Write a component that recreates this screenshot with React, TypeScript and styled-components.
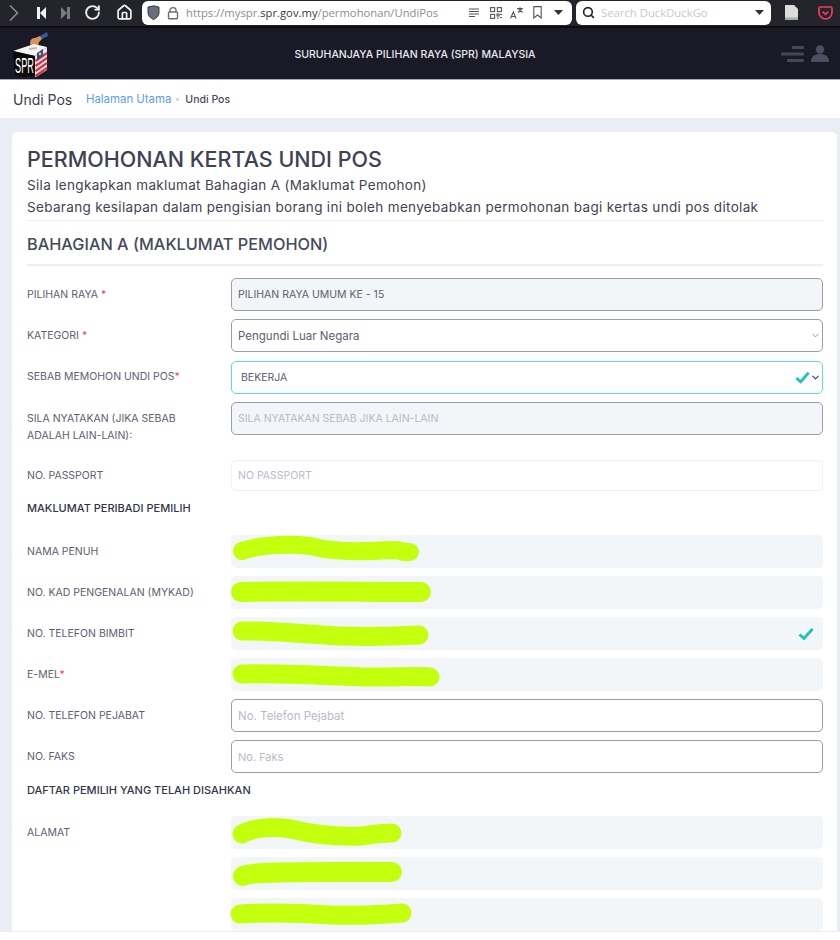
import React from 'react';
import styled, { createGlobalStyle } from 'styled-components';
import { ChevronDown, ChevronRight, Home, RotateCw, Search } from 'lucide-react';

const GlobalStyle = createGlobalStyle`
    html, body {
        margin: 0;
        background: #ffffff;
    }
    * {
        box-sizing: border-box;
    }
`;

const Page = styled.div`
    width: 840px;
    height: 932px;
    overflow: hidden;
    background: #ebedf5;
    font-family: Inter, "Open Sans", sans-serif;
    color: #3f4254;
`;

const BrowserBar = styled.div`
    height: 28px;
    display: flex;
    align-items: center;
    background: #24242c;
    border-bottom: 2px solid #0b0b10;
    padding-bottom: 1px;
`;

const NavSlot = styled.div<{ $w: number; $color?: string }>`
    width: ${p => p.$w}px;
    flex: none;
    display: flex;
    align-items: center;
    justify-content: center;
    color: ${p => p.$color || '#f2f2f2'};
`;

const UrlBox = styled.div<{ $w: number }>`
    width: ${p => p.$w}px;
    height: 24px;
    flex: none;
    display: flex;
    align-items: center;
    background: #ffffff;
    border-radius: 6px;
    font-family: "Open Sans", sans-serif;
    font-size: 11.25px;
    color: #8d8d8d;
`;

const UrlText = styled.div`
    flex: 1;
    white-space: nowrap;
    b {
        font-weight: 400;
        color: #3a3a3a;
    }
`;

const SearchHint = styled.div`
    flex: 1;
    color: #c9c9c9;
    font-size: 11.3px;
`;

const AppHeader = styled.div`
    height: 52px;
    display: grid;
    grid-template-columns: 1fr auto 1fr;
    align-items: center;
    background: #1a1a27;
    border-bottom: 1px solid #a9a9bb;
`;

const LogoCell = styled.div`
    padding-left: 12px;
    display: flex;
`;

const HeaderTitle = styled.div`
    font-size: 10.5px;
    font-weight: 500;
    color: #e9e9f1;
    margin-top: 2px;
    margin-right: 10px;
`;

const HeaderTools = styled.div`
    display: flex;
    justify-content: flex-end;
    align-items: center;
    gap: 7px;
    padding-right: 11px;
    color: #474759;
`;

const BreadcrumbBar = styled.div`
    height: 38px;
    display: flex;
    align-items: center;
    background: #ffffff;
    padding-left: 13px;
`;

const PageName = styled.div`
    font-size: 14px;
    width: 73px;
    color: #3a3c4e;
`;

const Crumb = styled.span<{ $link?: boolean }>`
    font-size: ${p => (p.$link ? 11.4 : 10.5)}px;
    font-weight: ${p => (p.$link ? 400 : 500)};
    color: ${p => (p.$link ? '#5c9ef0' : '#4a4c5e')};
`;

const CrumbDot = styled.span`
    width: 3px;
    height: 3px;
    border-radius: 50%;
    background: #c9cbd8;
    margin: 1px 6px 0 5px;
`;

const Content = styled.div`
    padding: 14px 3px 0 12px;
`;

const Card = styled.div`
    background: #ffffff;
    border-radius: 5px 5px 0 0;
    padding: 13px 14px 0 15px;
`;

const Title = styled.h1`
    margin: 0 0 1px;
    font-size: 21.5px;
    line-height: 28px;
    font-weight: 500;
    color: #3f4254;
`;

const Lead = styled.p`
    margin: 0;
    font-size: 13.5px;
    letter-spacing: 0.33px;
    line-height: 22px;
    color: #3f4254;
`;

const SectionHead = styled.h2`
    margin: 2px 0 12px;
    height: 46px;
    border-top: 1px solid #eeeef3;
    border-bottom: 2px solid #eeeef3;
    display: flex;
    align-items: center;
    padding-top: 3px;
    font-size: 16.3px;
    font-weight: 500;
    color: #464a5c;
`;

const Row = styled.div<{ $gap?: number; $top?: boolean }>`
    display: grid;
    grid-template-columns: 204px 592px;
    align-items: ${p => (p.$top ? 'start' : 'center')};
    margin-bottom: ${p => p.$gap ?? 8}px;
`;

const Label = styled.div<{ $raise?: number; $drop?: number }>`
    font-size: 10.5px;
    line-height: 17px;
    color: #5e6072;
    padding-bottom: ${p => p.$raise ?? 0}px;
    padding-top: ${p => p.$drop ?? 0}px;
    span {
        color: #f1416c;
    }
`;

const Field = styled.div<{ $kind?: 'disabled' | 'open' | 'valid' | 'faint' | 'solid'; $h?: number; $fs?: number }>`
    position: relative;
    height: ${p => p.$h ?? 33}px;
    display: flex;
    align-items: center;
    padding: 0 6px;
    font-size: ${p => p.$fs ?? 10.5}px;
    border-radius: 5px;
    color: #5e6072;
    background: ${p => (p.$kind === 'disabled' || p.$kind === 'solid' ? '#f3f6f9' : '#ffffff')};
    border: ${p => {
        if (p.$kind === 'solid') return '0';
        if (p.$kind === 'valid') return '1.5px solid #5fdcd3';
        if (p.$kind === 'faint') return '1px solid #eff0f4';
        return '1.5px solid #9a9ab0';
    }};
`;

const Placeholder = styled.span`
    color: #b9bac7;
`;

const FieldIcons = styled.div`
    position: absolute;
    right: 1px;
    top: 0;
    bottom: 0;
    display: flex;
    align-items: center;
    color: #8b8ca0;
`;

const Sub = styled.div<{ $h: number }>`
    height: ${p => p.$h}px;
    padding-top: 9px;
    font-size: 11px;
    line-height: 17px;
    font-weight: 500;
    color: #33354a;
`;

const Scribble = styled.svg`
    position: absolute;
    left: 0;
    top: 0;
    overflow: visible;
    pointer-events: none;
`;

const Mark = ({ d, w = 19 }: { d: string; w?: number }) => (
    <Scribble width="592" height="33" viewBox="0 0 592 33" fill="none">
        <path d={d} stroke="#c4ff0e" strokeWidth={w} strokeLinecap="round" strokeLinejoin="round" />
    </Scribble>
);

const Check = ({ size = 15 }: { size?: number }) => (
    <svg width={size} height={size} viewBox="0 0 16 16" fill="none">
        <path d="M1.5 8.5 L6 12.5 L14.5 3" stroke="#1bc5bd" strokeWidth="3" />
    </svg>
);

const SkipLeft = () => (
    <svg width="9" height="12" viewBox="0 0 9 12" fill="currentColor">
        <path d="M0 0 H3 V12 H0 Z M9 0 V12 L3 6 Z" />
    </svg>
);

const SkipRight = () => (
    <svg width="9" height="12" viewBox="0 0 9 12" fill="currentColor">
        <path d="M6 0 H9 V12 H6 Z M0 0 V12 L6 6 Z" />
    </svg>
);

const Shield = () => (
    <svg width="13" height="15" viewBox="0 0 13 15">
        <path d="M1 2 L6.5 .8 L12 2 V8 C12 11 9 13.5 6.5 14.5 C4 13.5 1 11 1 8 Z" fill="#6b6f7c" stroke="#3c3c44" strokeWidth="1" />
    </svg>
);

const Lock = () => (
    <svg width="12" height="14" viewBox="0 0 12 14" fill="none" stroke="#6d6d6d" strokeWidth="1.4">
        <path d="M3 6 V4 C3 .8 9 .8 9 4 V6" />
        <rect x="1.5" y="6" width="9" height="6.8" rx="1" />
    </svg>
);

const ReaderLines = () => (
    <svg width="11" height="9" viewBox="0 0 11 9" stroke="#555" strokeWidth="1.2">
        <path d="M0 1 H10 M0 3.5 H10 M0 6 H10 M0 8.5 H6" />
    </svg>
);

const QrCode = () => (
    <svg width="12" height="12" viewBox="0 0 12 12" fill="none" stroke="#555" strokeWidth="1.1">
        <rect x=".6" y=".6" width="4" height="4" />
        <rect x="7.4" y=".6" width="4" height="4" />
        <rect x=".6" y="7.4" width="4" height="4" />
        <path d="M7 7 H9 V9 H7 Z M10 7.5 H12 M10 10.5 H12 M7 11 H9" />
    </svg>
);

const TranslateMark = () => (
    <svg width="14" height="12" viewBox="0 0 14 12" fill="none" stroke="#555" strokeWidth="1.1">
        <path d="M.5 11.5 L3.3 5 L6 11.5 M1.5 9.5 H5" />
        <path d="M7 1.5 H13 M10 .2 V1.5 M8 5.5 L12 1.5 M8.5 2 L12.5 5.5" />
    </svg>
);

const Bookmark = () => (
    <svg width="9" height="13" viewBox="0 0 9 13" fill="none" stroke="#555" strokeWidth="1.1">
        <path d="M.8 .6 H8.2 V12 L4.5 9 L.8 12 Z" />
    </svg>
);

const Caret = () => (
    <svg width="9" height="5" viewBox="0 0 9 5">
        <path d="M0 0 H9 L4.5 5 Z" fill="#333" />
    </svg>
);

const DocIcon = () => (
    <svg width="13" height="15" viewBox="0 0 13 15">
        <path d="M0 0 H9 L13 4 V15 H0 Z" fill="#dcdcdc" />
        <path d="M0 12.5 H13 V15 H0 Z" fill="#a9a9a9" />
    </svg>
);

const PocketIcon = () => (
    <svg width="15" height="14" viewBox="0 0 15 14" fill="none">
        <path d="M1 2.4 C1 1.4 1.6 1 2.4 1 H12.6 C13.4 1 14 1.4 14 2.4 V6.5 C14 10.4 11 13 7.5 13 C4 13 1 10.4 1 6.5 Z" stroke="#ef3f56" strokeWidth="1.7" />
        <path d="M4.6 5.6 L7.5 8.4 L10.4 5.6" stroke="#ef3f56" strokeWidth="1.7" />
    </svg>
);

const Logo = () => (
    <svg width="38" height="46" viewBox="0 0 38 46">
        <path d="M28 5 L35 1 L36 5 L30 8 Z" fill="#2f5f9e" />
        <path d="M18 12 C18 9 20 7 23 7 L28 5 L30 8 L27 11 L26 15 L19 15 Z" fill="#d9925a" />
        <path d="M1 20 L22 13 L35 16 L23 25 Z" fill="#f4f4f4" />
        <path d="M17 17 L25 16 L25 18 L17 19 Z" fill="#b9b9b9" />
        <path d="M1 20 L23 25 V45 L11 46 L3 44 Z" fill="#0a0a0a" />
        <path d="M23 25 L35 16 V39 L24 46 H23 Z" fill="#e8e8ee" />
        <path d="M23.5 30 L35 22 M23.5 35 L35 27 M23.5 40 L35 32 M23.5 45 L35 37" stroke="#d8353f" strokeWidth="2.2" />
        <path d="M25 22 L31 18 V25 L25 29 Z" fill="#274b96" />
        <circle cx="28" cy="23" r="1.4" fill="#f4c430" />
        <g transform="translate(3 42) scale(0.92 2.2)">
            <text fontFamily="'Liberation Sans', sans-serif" fontSize="10" fill="#ffffff">SPR</text>
        </g>
    </svg>
);

const MenuGlyph = () => (
    <svg width="23" height="16" viewBox="0 0 23 16" fill="currentColor">
        <rect x="11" y="0" width="12" height="3" rx="1" />
        <rect x="0" y="6.5" width="23" height="3" rx="1" />
        <rect x="6" y="13" width="17" height="3" rx="1" />
    </svg>
);

const UserGlyph = () => (
    <svg width="18" height="17" viewBox="0 0 18 17" fill="#4c4e62">
        <circle cx="9" cy="4.5" r="4.2" />
        <path d="M0 17 C0 11 4 9 9 9 C14 9 18 11 18 17 Z" />
    </svg>
);

const BrowserChrome = () => (
    <BrowserBar>
        <NavSlot $w={28} $color="#8a8a90"><ChevronRight size={28} strokeWidth={1.5} /></NavSlot>
        <NavSlot $w={27}><SkipLeft /></NavSlot>
        <NavSlot $w={21} $color="#7c7c84"><SkipRight /></NavSlot>
        <NavSlot $w={32}><RotateCw size={17} strokeWidth={2.6} /></NavSlot>
        <NavSlot $w={32}><Home size={17} strokeWidth={2.4} /></NavSlot>
        <NavSlot $w={2} />
        <UrlBox $w={430}>
            <NavSlot $w={22}><Shield /></NavSlot>
            <NavSlot $w={18}><Lock /></NavSlot>
            <NavSlot $w={4} />
            <UrlText>https://myspr.<b>spr.gov.my</b>/permohonan/UndiPos</UrlText>
            <NavSlot $w={21}><ReaderLines /></NavSlot>
            <NavSlot $w={21}><QrCode /></NavSlot>
            <NavSlot $w={21}><TranslateMark /></NavSlot>
            <NavSlot $w={21}><Bookmark /></NavSlot>
            <NavSlot $w={21}><Caret /></NavSlot>
            <NavSlot $w={3} />
        </UrlBox>
        <NavSlot $w={4} />
        <UrlBox $w={195}>
            <NavSlot $w={25} $color="#222"><Search size={13} strokeWidth={3} /></NavSlot>
            <SearchHint>Search DuckDuckGo</SearchHint>
            <NavSlot $w={24}><Caret /></NavSlot>
        </UrlBox>
        <NavSlot $w={40}><DocIcon /></NavSlot>
        <NavSlot $w={28}><PocketIcon /></NavSlot>
    </BrowserBar>
);

const App = () => (
    <Page>
        <GlobalStyle />
        <BrowserChrome />
        <AppHeader>
            <LogoCell><Logo /></LogoCell>
            <HeaderTitle>SURUHANJAYA PILIHAN RAYA (SPR) MALAYSIA</HeaderTitle>
            <HeaderTools>
                <MenuGlyph />
                <UserGlyph />
            </HeaderTools>
        </AppHeader>
        <BreadcrumbBar>
            <PageName>Undi Pos</PageName>
            <Crumb $link>Halaman Utama</Crumb>
            <CrumbDot />
            <Crumb>Undi Pos</Crumb>
        </BreadcrumbBar>
        <Content>
            <Card>
                <Title>PERMOHONAN KERTAS UNDI POS</Title>
                <Lead>Sila lengkapkan maklumat Bahagian A (Maklumat Pemohon)</Lead>
                <Lead>Sebarang kesilapan dalam pengisian borang ini boleh menyebabkan permohonan bagi kertas undi pos ditolak</Lead>
                <SectionHead>BAHAGIAN A (MAKLUMAT PEMOHON)</SectionHead>

                <Row>
                    <Label>PILIHAN RAYA <span>*</span></Label>
                    <Field $kind="disabled">PILIHAN RAYA UMUM KE - 15</Field>
                </Row>
                <Row $gap={9}>
                    <Label>KATEGORI <span>*</span></Label>
                    <Field $kind="open" $fs={11.5}>
                        Pengundi Luar Negara
                        <FieldIcons><ChevronDown size={11} strokeWidth={2} /></FieldIcons>
                    </Field>
                </Row>
                <Row>
                    <Label $raise={2}>SEBAB MEMOHON UNDI POS<span>*</span></Label>
                    <Field $kind="valid">
                        &nbsp;BEKERJA
                        <FieldIcons>
                            <Check />
                            <ChevronDown size={11} strokeWidth={2.4} color="#3f4254" />
                        </FieldIcons>
                    </Field>
                </Row>
                <Row $gap={16} $top>
                    <Label $drop={8}>SILA NYATAKAN (JIKA SEBAB<br />ADALAH LAIN-LAIN):</Label>
                    <Field $kind="disabled"><Placeholder>SILA NYATAKAN SEBAB JIKA LAIN-LAIN</Placeholder></Field>
                </Row>
                <Row $gap={0}>
                    <Label>NO. PASSPORT</Label>
                    <Field $kind="faint" $h={31}><Placeholder>NO PASSPORT</Placeholder></Field>
                </Row>

                <Sub $h={44}>MAKLUMAT PERIBADI PEMILIH</Sub>

                <Row>
                    <Label>NAMA PENUH</Label>
                    <Field $kind="solid">
                        <Mark d="M11 16 C30 9 60 9 80 11 C100 17 130 17 160 15 C180 15 160 17 179 17" w={18} />
                    </Field>
                </Row>
                <Row>
                    <Label>NO. KAD PENGENALAN (MYKAD)</Label>
                    <Field $kind="solid">
                        <Mark d="M10 16 C60 15 130 16 190 16" w={20} />
                    </Field>
                </Row>
                <Row>
                    <Label>NO. TELEFON BIMBIT</Label>
                    <Field $kind="solid">
                        <Mark d="M11 14 C40 13 70 17 110 19 C140 20 170 19 188 18" w={19} />
                        <FieldIcons><Check size={16} /><NavSlot $w={8} /></FieldIcons>
                    </Field>
                </Row>
                <Row>
                    <Label>E-MEL<span>*</span></Label>
                    <Field $kind="solid">
                        <Mark d="M11 16 C50 15 100 18 140 19 C170 19 185 18 199 19" w={19} />
                    </Field>
                </Row>
                <Row>
                    <Label>NO. TELEFON PEJABAT</Label>
                    <Field $kind="open" $fs={11.5}><Placeholder>No. Telefon Pejabat</Placeholder></Field>
                </Row>
                <Row $gap={0}>
                    <Label>NO. FAKS</Label>
                    <Field $kind="open" $fs={11}><Placeholder>No. Faks</Placeholder></Field>
                </Row>

                <Sub $h={43}>DAFTAR PEMILIH YANG TELAH DISAHKAN</Sub>

                <Row>
                    <Label $raise={1}>ALAMAT</Label>
                    <Field $kind="solid">
                        <Mark d="M11 18 C20 12 40 10 60 13 C80 18 100 21 130 20 C145 18 150 17 161 17" w={19} />
                    </Field>
                </Row>
                <Row>
                    <Label />
                    <Field $kind="solid">
                        <Mark d="M12 19 C20 15 60 15 100 15 C130 15 150 15 161 15" w={20} />
                    </Field>
                </Row>
                <Row>
                    <Label />
                    <Field $kind="solid">
                        <Mark d="M9 16 C40 14 70 15 100 17 C125 18 145 17 171 15" w={19} />
                    </Field>
                </Row>
            </Card>
        </Content>
    </Page>
);

export default App;
